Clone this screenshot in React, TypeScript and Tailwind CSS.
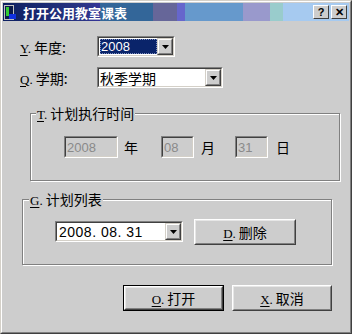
import React from 'react';

const cjk = "font-['Noto_Sans_CJK_SC',sans-serif]";
const latin = "font-['Liberation_Sans','Noto_Sans_CJK_SC',sans-serif]";

// 下拉按鈕（凸起的小方塊 + 黑色三角形）
function DropButton() {
    return (
        <div className="w-[16px] h-full border border-t-[#d4d0c8] border-l-[#d4d0c8] border-r-[#404040] border-b-[#404040] bg-[#cdcdcd]">
            <div className="w-full h-full border border-t-white border-l-white border-r-[#808080] border-b-[#808080] flex items-center justify-center">
                <svg width="7" height="4" viewBox="0 0 7 4">
                    <path d="M0 0H7L3.5 4Z" fill="#000" />
                </svg>
            </div>
        </div>
    );
}

// 凹陷的邊框
function Sunken({ className, inner, children }: { className: string; inner: string; children: React.ReactNode }) {
    return (
        <div className={`border border-t-[#808080] border-l-[#808080] border-r-white border-b-white ${className}`}>
            <div className={`w-full h-full border border-t-[#404040] border-l-[#404040] border-r-[#d4d0c8] border-b-[#d4d0c8] flex ${inner}`}>
                {children}
            </div>
        </div>
    );
}

function Combo({ width, children }: { width: string; children: React.ReactNode }) {
    return (
        <Sunken className={`${width} h-[21px]`} inner="bg-white">
            <div className="flex-1 flex items-center min-w-0">{children}</div>
            <DropButton />
        </Sunken>
    );
}

function DateBox({ width, value }: { width: string; value: string }) {
    return (
        <Sunken className={`${width} h-[22px]`} inner="bg-[#cdcdcd] items-center">
            <span className={`${latin} text-[13px] text-[#8a8a8a] pl-[1px] leading-none`}>{value}</span>
        </Sunken>
    );
}

function Button({ width, hot, label, isDefault }: { width: string; hot: string; label: string; isDefault?: boolean }) {
    return (
        <div className={`${width} h-[26px] ${isDefault ? 'border border-black' : ''}`}>
            <div className="w-full h-full border border-t-white border-l-white border-r-[#404040] border-b-[#404040]">
                <div className="w-full h-full border border-t-[#e6e6e6] border-l-[#e6e6e6] border-r-[#808080] border-b-[#808080] flex items-center justify-center">
                    <Label hot={hot} text={label} />
                </div>
            </div>
        </div>
    );
}

function Label({ hot, text }: { hot: string; text: string }) {
    return (
        <span className={`${cjk} inline-block h-[14px] text-[14px] text-black leading-[14px] whitespace-nowrap`}>
            <u className="font-['Liberation_Serif',serif] text-[13px] underline-offset-[2px]">{hot}</u>
            <span className="font-['Liberation_Serif',serif] text-[13px]">.</span>
            <span className="ml-[3px]">{text}</span>
        </span>
    );
}

export default function App() {
    return (
        <div className="w-[352px] h-[334px] border border-t-[#d4d0c8] border-l-[#d4d0c8] border-r-[#404040] border-b-[#404040] bg-[#cdcdcd]">
            <div className="w-full h-full border border-t-white border-l-white border-r-[#808080] border-b-[#808080] p-[1px]">
                {/* 標題列 */}
                <div className="h-[18px] flex items-center bg-[linear-gradient(to_right,#0c1f60_0px,#2a3585_80px,#333399_97px,#336699_97px,#336699_150px,#666699_150px,#666699_174px,#6666cc_174px,#6666cc_182px,#6699cc_182px,#6699cc_240px,#9999cc_240px,#9999cc_267px,#99cccc_267px,#99cccc_280px,#a6caf0_280px)]">
                    <svg width="13" height="15" viewBox="0 0 13 15" className="ml-[1px] mt-[1px]">
                        <rect x="0.5" y="0.5" width="9" height="14" fill="#0b1a4a" stroke="#c0c0c0" />
                        <rect x="2" y="2" width="3" height="9" fill="#33cc33" />
                        <rect x="5" y="9" width="7" height="5" fill="#1030e0" />
                    </svg>
                    <span className={`${cjk} text-[13px] font-bold text-white ml-[6px] leading-none`}>打开公用教室课表</span>
                    <div className="ml-auto mr-[2px] flex gap-[2px]">
                        {['?', '✕'].map((g) => (
                            <div key={g} className="w-[16px] h-[14px] border border-t-white border-l-white border-r-[#404040] border-b-[#404040] bg-[#cdcdcd] flex items-center justify-center">
                                <span className="font-['Liberation_Sans',sans-serif] font-bold text-[11px] leading-none text-black">{g}</span>
                            </div>
                        ))}
                    </div>
                </div>

                {/* 年度 */}
                <div className="mt-[15px] flex items-center h-[21px]">
                    <div className="pl-[17px] w-[94px]">
                        <Label hot="Y" text="年度:" />
                    </div>
                    <Combo width="w-[78px]">
                        <div className="ml-[1px] w-[58px] h-[15px] bg-[#0a246a] border border-dotted border-[#8090c0] flex items-center">
                            <span className={`${latin} text-[13px] text-white leading-none`}>2008</span>
                        </div>
                    </Combo>
                </div>

                {/* 學期 */}
                <div className="mt-[10px] flex items-center h-[21px]">
                    <div className="pl-[17px] w-[94px]">
                        <Label hot="Q" text="学期:" />
                    </div>
                    <Combo width="w-[126px]">
                        <span className={`${cjk} text-[14px] text-black leading-none pl-[1px]`}>秋季学期</span>
                    </Combo>
                </div>

                {/* 計劃執行時間 */}
                <fieldset className="mt-[18px] ml-[27px] w-[310px] h-[75px] border border-[#808080] shadow-[1px_1px_0_white,inset_1px_1px_0_white]">
                    <legend className="ml-[5px] px-[1px] bg-[#cdcdcd] relative leading-[14px] h-[14px]">
                        <Label hot="T" text="计划执行时间" />
                    </legend>
                    <div className="mt-[16px] pl-[33px] flex items-center">
                        <DateBox width="w-[54px]" value="2008" />
                        <span className={`${cjk} text-[14px] ml-[6px] leading-none`}>年</span>
                        <div className="ml-[23px]"><DateBox width="w-[33px]" value="08" /></div>
                        <span className={`${cjk} text-[14px] ml-[7px] leading-none`}>月</span>
                        <div className="ml-[20px]"><DateBox width="w-[33px]" value="31" /></div>
                        <span className={`${cjk} text-[14px] ml-[8px] leading-none`}>日</span>
                    </div>
                </fieldset>

                {/* 計劃列表 */}
                <fieldset className="mt-[11px] ml-[19px] w-[310px] h-[73px] border border-[#808080] shadow-[1px_1px_0_white,inset_1px_1px_0_white]">
                    <legend className="ml-[6px] px-[1px] bg-[#cdcdcd] relative leading-[14px] h-[14px]">
                        <Label hot="G" text="计划列表" />
                    </legend>
                    <div className="mt-[12px] pl-[32px] flex items-center h-[27px]">
                        <Combo width="w-[128px]">
                            <span className={`${latin} text-[14px] text-black leading-none pl-[2px] tracking-[0.5px]`}>2008. 08. 31</span>
                        </Combo>
                        <div className="ml-[11px]">
                            <Button width="w-[102px]" hot="D" label="删除" />
                        </div>
                    </div>
                </fieldset>

                {/* 底部按鈕 */}
                <div className="mt-[20px] ml-[120px] flex gap-[8px]">
                    <Button width="w-[101px]" hot="O" label="打开" isDefault />
                    <Button width="w-[100px]" hot="X" label="取消" />
                </div>
            </div>
        </div>
    );
}
